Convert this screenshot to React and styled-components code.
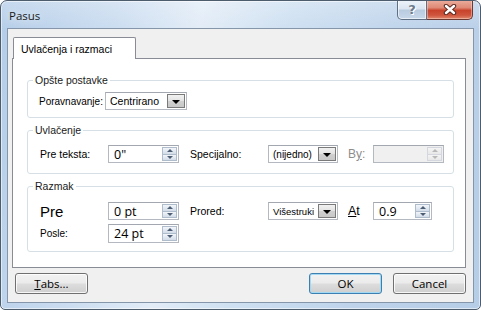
import React from "react";
import styled, { createGlobalStyle, css } from "styled-components";

const GlobalStyle = createGlobalStyle`
  html, body { margin: 0; padding: 0; background: #ffffff; }
  * { box-sizing: border-box; }
`;

const UI = `"Liberation Sans", Arial, sans-serif`;
const SEGOE = `"Open Sans", "Noto Sans", sans-serif`;

const Window = styled.div`
  width: 481px;
  height: 310px;
  display: flex;
  flex-direction: column;
  border: 1px solid #4e5d6e;
  border-radius: 7px 7px 5px 5px;
  background:
    linear-gradient(180deg, rgba(255,255,255,0.25) 0%, rgba(255,255,255,0) 30px),
    linear-gradient(100deg, #b4cde8 0%, #cadcf0 22%, #e2ecf7 38%, #cddff1 55%, #bfd4eb 75%, #b6cde7 100%);
  box-shadow: inset 0 0 0 1px rgba(255,255,255,0.55);
  overflow: hidden;
`;

const TitleBar = styled.div`
  height: 27px;
  display: flex;
  align-items: flex-start;
  justify-content: space-between;
  padding-left: 8px;
  padding-right: 7px;
  flex-shrink: 0;
`;

const Title = styled.div`
  font-family: ${SEGOE};
  font-size: 11.5px;
  color: #1a1a1a;
  margin-top: 7px;
  text-shadow: 0 0 8px rgba(255,255,255,0.9);
`;

const Caption = styled.div`
  display: flex;
  margin-top: -1px;
`;

const CapButton = styled.div`
  height: 20px;
  display: flex;
  align-items: center;
  justify-content: center;
  border: 1px solid #5f6f84;
  border-top: none;
  ${(p) =>
    p.$kind === "close"
      ? css`
          width: 46px;
          border-color: #6b3a32;
          border-left: none;
          border-radius: 0 0 5px 0;
          background: linear-gradient(180deg, #ecae9f 0%, #de8a76 40%, #c9432b 55%, #cf553d 80%, #e08a6e 100%);
          box-shadow: inset 0 0 0 1px rgba(255,220,210,0.45);
        `
      : css`
          width: 30px;
          border-radius: 0 0 0 5px;
          background: linear-gradient(180deg, #eef3f9 0%, #dbe6f2 45%, #b9cbdf 55%, #c8d8ea 100%);
          box-shadow: inset 0 0 0 1px rgba(255,255,255,0.6);
        `}
`;

const HelpGlyph = styled.span`
  font-family: "DejaVu Sans", sans-serif;
  font-weight: bold;
  font-size: 13px;
  color: #6b7a8d;
  text-shadow: 0 0 1px #fff, 1px 1px 0 #fff;
  margin-top: -1px;
`;

const Client = styled.div`
  flex: 1;
  margin: 0 6px 6px 6px;
  background: #f0f0f0;
  border: 1px solid #8596aa;
  display: flex;
  flex-direction: column;
  padding: 8px 7px 7px 4px;
`;

const TabStrip = styled.div`
  display: flex;
  padding-left: 1px;
  position: relative;
  z-index: 1;
`;

const Tab = styled.div`
  width: 123px;
  height: 22px;
  margin-bottom: -1px;
  background: #ffffff;
  border: 1px solid #898c95;
  border-bottom: none;
  border-radius: 2px 2px 0 0;
  font-family: ${UI};
  font-size: 10.5px;
  color: #000;
  padding: 5px 0 0 7px;
`;

const Panel = styled.div`
  height: 210px;
  background: #ffffff;
  border: 1px solid #898c95;
  padding: 21px 11px 16px 14px;
  display: flex;
  flex-direction: column;
  gap: 12px;
`;

const Group = styled.div`
  position: relative;
  height: ${(p) => p.$h}px;
  border: 1px solid #d5dfe5;
  border-radius: 3px;
  padding: ${(p) => p.$pad};
  display: flex;
  flex-direction: column;
  gap: 4px;
  flex-shrink: 0;
`;

const GroupLabel = styled.span`
  position: absolute;
  left: 5px;
  top: -8px;
  padding: 0 2px;
  background: #ffffff;
  font-family: ${UI};
  font-size: 10.5px;
  color: #1a1a1a;
  line-height: 14px;
`;

const Row = styled.div`
  display: flex;
  align-items: center;
  height: 18px;
`;

const Label = styled.span`
  width: ${(p) => p.$w}px;
  flex-shrink: 0;
  font-family: ${UI};
  font-size: ${(p) => p.$size || 10.5}px;
  color: ${(p) => (p.$disabled ? "#8d8d8d" : "#000")};
  white-space: nowrap;
  u { text-decoration: underline; text-underline-offset: 1px; }
`;

const Field = styled.div`
  width: ${(p) => p.$w}px;
  height: ${(p) => p.$h || 18}px;
  flex-shrink: 0;
  display: flex;
  align-items: stretch;
  border: 1px solid #b4b9c1;
  border-top-color: #a3a8b0;
  background: ${(p) => (p.$disabled ? "#f0f0f0" : "#ffffff")};
  padding: 1px;
`;

const FieldText = styled.span`
  flex: 1;
  display: flex;
  align-items: center;
  padding-left: ${(p) => p.$pl ?? 3}px;
  font-family: ${(p) => (p.$big ? SEGOE : UI)};
  font-size: ${(p) => p.$size || 10.5}px;
  color: #000;
  white-space: nowrap;
  overflow: hidden;
`;

const DropButton = styled.span`
  width: 18px;
  flex-shrink: 0;
  display: flex;
  align-items: center;
  justify-content: center;
  border: 1px solid #7a7a7a;
  background: linear-gradient(180deg, #f1f1f1 0%, #e2e2e2 50%, #d0d0d0 51%, #c8c8c8 100%);
  &::after {
    content: "";
    border-left: 4px solid transparent;
    border-right: 4px solid transparent;
    border-top: 4px solid #000;
    margin-top: 1px;
  }
`;

const SpinCol = styled.span`
  width: 15px;
  flex-shrink: 0;
  display: flex;
  flex-direction: column;
`;

const SpinButton = styled.span`
  flex: 1;
  display: flex;
  align-items: center;
  justify-content: center;
  border: 1px solid ${(p) => (p.$disabled ? "#d4d8de" : "#aebccc")};
  background: ${(p) =>
    p.$disabled
      ? "linear-gradient(180deg, #f4f4f4, #e8e8e8)"
      : "linear-gradient(180deg, #f3f6fa 0%, #e2e9f1 50%, #d2dce8 100%)"};
  & + & { border-top: none; }
  &::after {
    content: "";
    border-left: 3px solid transparent;
    border-right: 3px solid transparent;
    ${(p) =>
      p.$up
        ? `border-bottom: 3px solid ${p.$disabled ? "#b8b8b8" : "#4d5d74"};`
        : `border-top: 3px solid ${p.$disabled ? "#b8b8b8" : "#4d5d74"};`}
  }
`;

const Gap = styled.span`
  width: ${(p) => p.$w}px;
  flex-shrink: 0;
`;

const Footer = styled.div`
  display: flex;
  align-items: center;
  margin-top: 5px;
  padding-left: 3px;
  gap: 11px;
`;

const Spacer = styled.div`
  flex: 1;
`;

const Button = styled.div`
  width: 73px;
  height: 21px;
  display: flex;
  align-items: center;
  justify-content: center;
  border: 1px solid ${(p) => (p.$default ? "#3c7fb1" : "#707070")};
  border-radius: 3px;
  background: linear-gradient(180deg, #f2f2f2 0%, #ebebeb 48%, #dddddd 52%, #cfcfcf 100%);
  box-shadow: inset 0 0 0 1px ${(p) => (p.$default ? "#a3d9f3" : "rgba(255,255,255,0.8)")};
  font-family: ${SEGOE};
  font-size: 11.5px;
  color: #000;
  u { text-decoration: underline; text-underline-offset: 1px; }
`;

function Combo({ w, text, size }) {
  return (
    <Field $w={w}>
      <FieldText $size={size}>{text}</FieldText>
      <DropButton />
    </Field>
  );
}

function Spin({ w, text, disabled, h }) {
  return (
    <Field $w={w} $h={h} $disabled={disabled}>
      <FieldText $big $size={12.5} $pl={4}>{text}</FieldText>
      <SpinCol>
        <SpinButton $up $disabled={disabled} />
        <SpinButton $disabled={disabled} />
      </SpinCol>
    </Field>
  );
}

export default function App() {
  return (
    <>
      <GlobalStyle />
      <Window>
        <TitleBar>
          <Title>Pasus</Title>
          <Caption>
            <CapButton $kind="help">
              <HelpGlyph>?</HelpGlyph>
            </CapButton>
            <CapButton $kind="close">
              <svg width="14" height="11" viewBox="0 0 14 11">
                <path d="M3 2 L11 9 M11 2 L3 9" stroke="#5b2a22" strokeWidth="4.4" strokeLinecap="round" />
                <path d="M3 2 L11 9 M11 2 L3 9" stroke="#ffffff" strokeWidth="2.4" strokeLinecap="round" />
              </svg>
            </CapButton>
          </Caption>
        </TitleBar>
        <Client>
          <TabStrip>
            <Tab>Uvlačenja i razmaci</Tab>
          </TabStrip>
          <Panel>
            <Group $h={38} $pad="11px 0 0 11px">
              <GroupLabel>Opšte postavke</GroupLabel>
              <Row>
                <Label $w={66} $size={10}>Poravnavanje:</Label>
                <Combo w={82} text="Centrirano" />
              </Row>
            </Group>
            <Group $h={44} $pad="14px 0 0 12px">
              <GroupLabel>Uvlačenje</GroupLabel>
              <Row>
                <Label $w={68}>Pre teksta:</Label>
                <Spin w={71} text='0"' />
                <Gap $w={11} />
                <Label $w={78}>Specijalno:</Label>
                <Combo w={70} text="(nijedno)" size={10} />
                <Gap $w={10} />
                <Label $w={25} $size={12} $disabled>
                  B<u>y</u>:
                </Label>
                <Spin w={71} text="" disabled />
              </Row>
            </Group>
            <Group $h={66} $pad="15px 0 0 12px">
              <GroupLabel>Razmak</GroupLabel>
              <Row>
                <Label $w={68} $size={15}>Pre</Label>
                <Spin w={71} text="0 pt" />
                <Gap $w={11} />
                <Label $w={78}>Prored:</Label>
                <Combo w={70} text="Višestruki" size={9.5} />
                <Gap $w={10} />
                <Label $w={25} $size={12.5}>
                  <u>A</u>t
                </Label>
                <Spin w={59} text="0.9" />
              </Row>
              <Row>
                <Label $w={68} $size={10}>Posle:</Label>
                <Spin w={71} h={19} text="24 pt" />
              </Row>
            </Group>
          </Panel>
          <Footer>
            <Button>
              <u>T</u>abs...
            </Button>
            <Spacer />
            <Button $default>OK</Button>
            <Button>Cancel</Button>
          </Footer>
        </Client>
      </Window>
    </>
  );
}
